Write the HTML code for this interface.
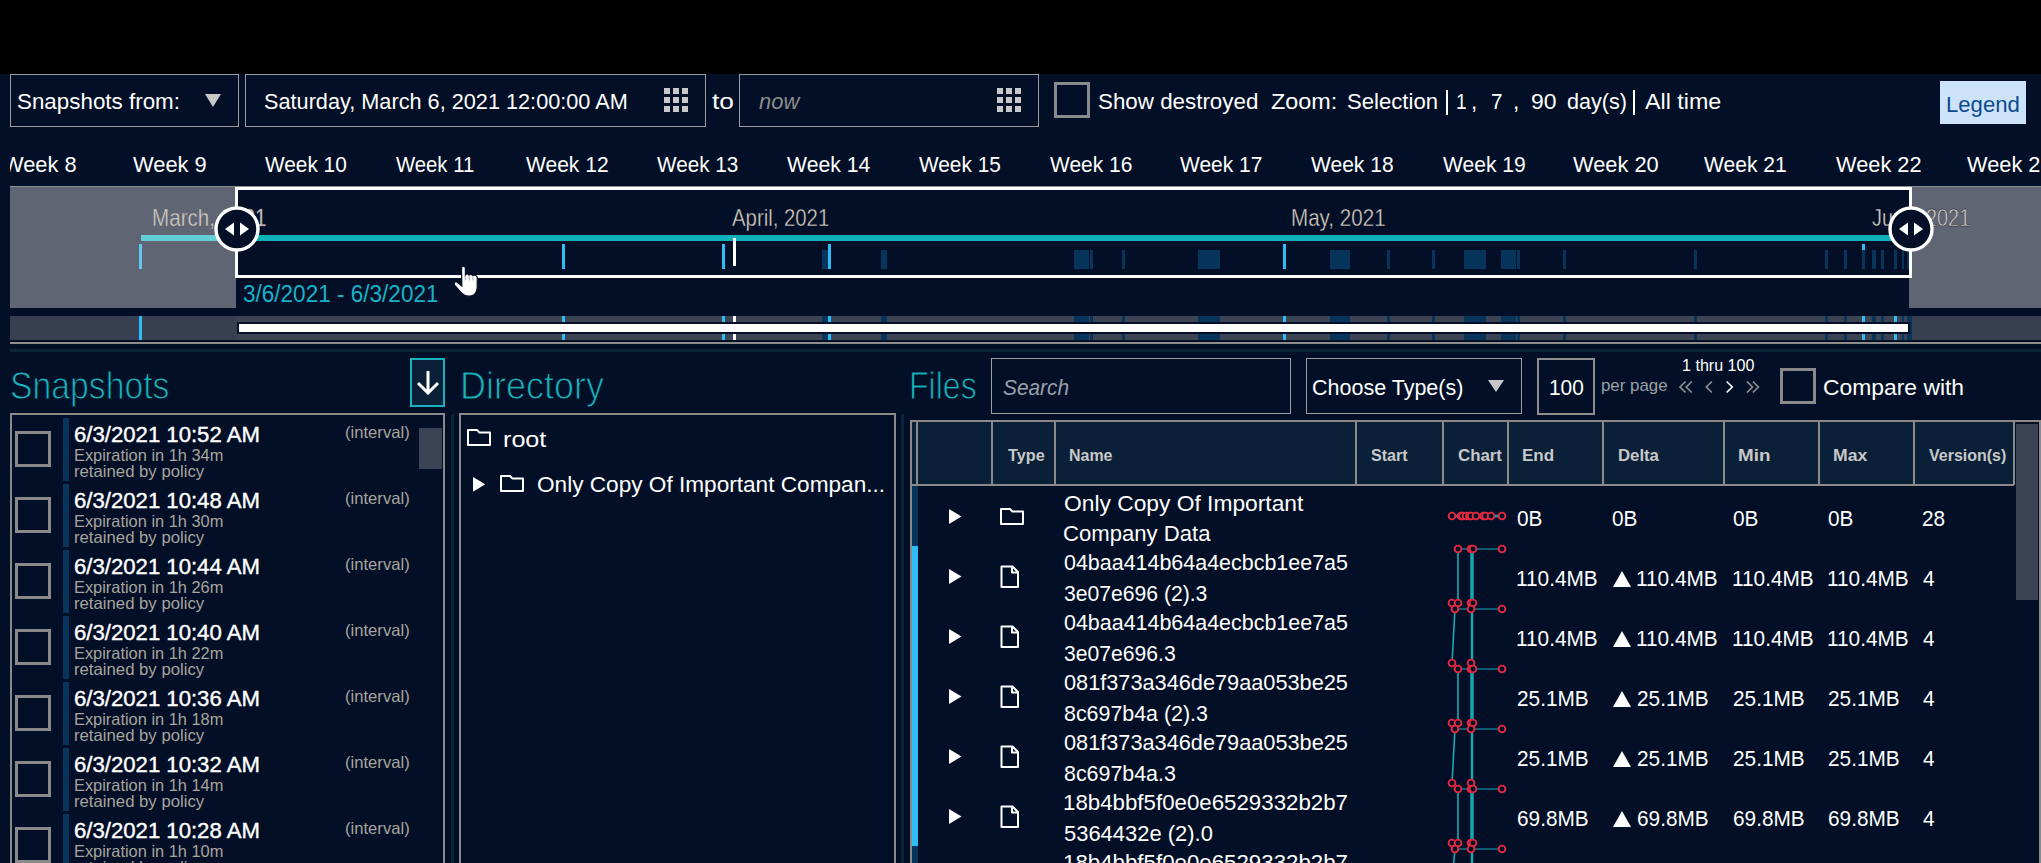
<!DOCTYPE html><html><head><meta charset="utf-8"><title>Snapshots</title><style>
*{margin:0;padding:0;box-sizing:border-box}
html,body{width:2041px;height:863px;overflow:hidden;background:#020f26;font-family:"Liberation Sans",sans-serif;color:#fff}
.a{position:absolute}
.t{position:absolute;white-space:nowrap;line-height:1;transform-origin:0 0}
.grid{position:absolute;width:25px;height:25px}
.grid i{position:absolute;width:6px;height:6px;background:#c8c8c8}
</style></head><body>
<div class="a" style="left:0px;top:0px;width:2041px;height:74px;background:#000;"></div>
<div class="a" style="left:10px;top:74px;width:229px;height:53px;border:1px solid #9c9c9c;background:transparent"></div>
<div class="t" style="left:16.99px;top:91px;font-size:22.5px;color:#fff;transform:scaleX(0.9946);">Snapshots from:</div>
<svg class="a" style="left:205px;top:94px" width="16" height="13"><polygon points="0,0 16,0 8,13" fill="#c8c8c8"/></svg>
<div class="a" style="left:245px;top:74px;width:461px;height:53px;border:1px solid #9c9c9c;background:transparent"></div>
<div class="t" style="left:264.02px;top:91px;font-size:22.5px;color:#fff;transform:scaleX(0.9642);">Saturday, March 6, 2021 12:00:00 AM</div>
<div class="grid" style="left:664px;top:88px"><i style="left:0px;top:0px"></i><i style="left:9px;top:0px"></i><i style="left:18px;top:0px"></i><i style="left:0px;top:9px"></i><i style="left:9px;top:9px"></i><i style="left:18px;top:9px"></i><i style="left:0px;top:18px"></i><i style="left:9px;top:18px"></i><i style="left:18px;top:18px"></i></div>
<div class="t" style="left:711.61px;top:91px;font-size:22.5px;color:#fff;transform:scaleX(1.1681);">to</div>
<div class="a" style="left:739px;top:74px;width:300px;height:53px;border:1px solid #9c9c9c;background:transparent"></div>
<div class="t" style="left:758.67px;top:91px;font-size:22.5px;color:#8c8c8c;font-style:italic;transform:scaleX(0.9745);">now</div>
<div class="grid" style="left:997px;top:88px"><i style="left:0px;top:0px"></i><i style="left:9px;top:0px"></i><i style="left:18px;top:0px"></i><i style="left:0px;top:9px"></i><i style="left:9px;top:9px"></i><i style="left:18px;top:9px"></i><i style="left:0px;top:18px"></i><i style="left:9px;top:18px"></i><i style="left:18px;top:18px"></i></div>
<div class="a" style="left:1054px;top:82px;width:36px;height:36px;border:3px solid #8a8a8a;background:transparent"></div>
<div class="t" style="left:1097.99px;top:91px;font-size:22.5px;color:#fff;transform:scaleX(0.9939);">Show destroyed</div>
<div class="t" style="left:1271.3px;top:91px;font-size:22.5px;color:#fff;transform:scaleX(1.0395);">Zoom:</div>
<div class="t" style="left:1347.0px;top:91px;font-size:22.5px;color:#fff;transform:scaleX(0.9831);">Selection</div>
<div class="t" style="left:1530.57px;top:91px;font-size:22.5px;color:#fff;transform:scaleX(1.0183);">90</div>
<div class="t" style="left:1567.14px;top:91px;font-size:22.5px;color:#fff;transform:scaleX(0.9587);">day(s)</div>
<div class="t" style="left:1644.5px;top:91px;font-size:22.5px;color:#fff;transform:scaleX(1.0345);">All time</div>
<div class="t" style="left:1456.07px;top:91px;font-size:22.5px;color:#fff;transform:scaleX(0.8480);">1</div>
<div class="t" style="left:1490.57px;top:91px;font-size:22.5px;color:#fff;transform:scaleX(0.9182);">7</div>
<div class="t" style="left:1471px;top:91px;font-size:22.5px;color:#fff;">,</div>
<div class="t" style="left:1513px;top:91px;font-size:22.5px;color:#fff;">,</div>
<div class="a" style="left:1446px;top:90px;width:2px;height:25px;background:#fff;"></div>
<div class="a" style="left:1633px;top:90px;width:2px;height:25px;background:#fff;"></div>
<div class="a" style="left:1940px;top:81px;width:86px;height:43px;background:#cce3fa;"></div>
<div class="t" style="left:1946.23px;top:94px;font-size:22.5px;color:#0c4a8e;transform:scaleX(0.9835);">Legend</div>
<div class="a" style="left:10px;top:140px;width:2031px;height:46px;overflow:hidden">
<div class="t" style="left:-7.21px;top:14px;font-size:22.5px;transform:scaleX(0.9704)">Week 8</div>
<div class="t" style="left:123.19px;top:14px;font-size:22.5px;transform:scaleX(0.9719)">Week 9</div>
<div class="t" style="left:254.60px;top:14px;font-size:22.5px;transform:scaleX(0.9244)">Week 10</div>
<div class="t" style="left:386.10px;top:14px;font-size:22.5px;transform:scaleX(0.9017)">Week 11</div>
<div class="t" style="left:516.39px;top:14px;font-size:22.5px;transform:scaleX(0.9348)">Week 12</div>
<div class="t" style="left:647.20px;top:14px;font-size:22.5px;transform:scaleX(0.9187)">Week 13</div>
<div class="t" style="left:777.09px;top:14px;font-size:22.5px;transform:scaleX(0.9425)">Week 14</div>
<div class="t" style="left:909.40px;top:14px;font-size:22.5px;transform:scaleX(0.9255)">Week 15</div>
<div class="t" style="left:1039.70px;top:14px;font-size:22.5px;transform:scaleX(0.9313)">Week 16</div>
<div class="t" style="left:1170.00px;top:14px;font-size:22.5px;transform:scaleX(0.9314)">Week 17</div>
<div class="t" style="left:1300.59px;top:14px;font-size:22.5px;transform:scaleX(0.9347)">Week 18</div>
<div class="t" style="left:1432.89px;top:14px;font-size:22.5px;transform:scaleX(0.9359)">Week 19</div>
<div class="t" style="left:1563.09px;top:14px;font-size:22.5px;transform:scaleX(0.9690)">Week 20</div>
<div class="t" style="left:1693.99px;top:14px;font-size:22.5px;transform:scaleX(0.9359)">Week 21</div>
<div class="t" style="left:1825.89px;top:14px;font-size:22.5px;transform:scaleX(0.9681)">Week 22</div>
<div class="t" style="left:1956.89px;top:14px;font-size:22.5px;transform:scaleX(0.9679)">Week 23</div>
</div>
<div class="a" style="left:10px;top:186px;width:2031px;height:122px;background:#5f6573;"></div>
<div class="a" style="left:10px;top:186px;width:2031px;height:1px;background:#8f8f8f;"></div>
<div class="a" style="left:236px;top:187px;width:1673px;height:121px;background:#020f26;"></div>
<div class="a" style="left:141px;top:235px;width:95px;height:6px;background:#62ced6;"></div>
<div class="a" style="left:236px;top:235px;width:1660px;height:6px;background:#10b1bb;"></div>
<div class="t" style="left:151.85px;top:206px;font-size:24px;color:#d4ccc2;transform:scaleX(0.8586);-webkit-text-stroke:0.35px #5f6573">March, 2021</div>
<div class="t" style="left:732.4px;top:206px;font-size:24px;color:#d4ccc2;transform:scaleX(0.8474);-webkit-text-stroke:0.35px #020f26">April, 2021</div>
<div class="t" style="left:1291.35px;top:206px;font-size:24px;color:#d4ccc2;transform:scaleX(0.8576);-webkit-text-stroke:0.35px #020f26">May, 2021</div>
<div class="t" style="left:1871.7px;top:206px;font-size:24px;color:#d4ccc2;transform:scaleX(0.8265);-webkit-text-stroke:0.35px #020f26">June, 2021</div>
<div class="a" style="left:139px;top:244px;width:3px;height:25px;background:#60c9f2;"></div>
<div class="a" style="left:822px;top:250px;width:9px;height:19px;background:#07345a;"></div>
<div class="a" style="left:881px;top:250px;width:6px;height:19px;background:#07345a;"></div>
<div class="a" style="left:1074px;top:250px;width:15px;height:19px;background:#07345a;"></div>
<div class="a" style="left:1090px;top:250px;width:3px;height:19px;background:#07345a;"></div>
<div class="a" style="left:1122px;top:250px;width:3px;height:19px;background:#07345a;"></div>
<div class="a" style="left:1198px;top:250px;width:22px;height:19px;background:#07345a;"></div>
<div class="a" style="left:1330px;top:250px;width:20px;height:19px;background:#07345a;"></div>
<div class="a" style="left:1387px;top:250px;width:3px;height:19px;background:#07345a;"></div>
<div class="a" style="left:1432px;top:250px;width:3px;height:19px;background:#07345a;"></div>
<div class="a" style="left:1464px;top:250px;width:22px;height:19px;background:#07345a;"></div>
<div class="a" style="left:1501px;top:250px;width:15px;height:19px;background:#07345a;"></div>
<div class="a" style="left:1517px;top:250px;width:3px;height:19px;background:#07345a;"></div>
<div class="a" style="left:1563px;top:250px;width:3px;height:19px;background:#07345a;"></div>
<div class="a" style="left:1694px;top:250px;width:3px;height:19px;background:#07345a;"></div>
<div class="a" style="left:1825px;top:250px;width:3px;height:19px;background:#07345a;"></div>
<div class="a" style="left:1844px;top:250px;width:3px;height:19px;background:#07345a;"></div>
<div class="a" style="left:1862px;top:250px;width:3px;height:19px;background:#07345a;"></div>
<div class="a" style="left:1872px;top:250px;width:4px;height:19px;background:#07345a;"></div>
<div class="a" style="left:1881px;top:250px;width:3px;height:19px;background:#07345a;"></div>
<div class="a" style="left:1894px;top:250px;width:3px;height:19px;background:#07345a;"></div>
<div class="a" style="left:1902px;top:250px;width:2px;height:19px;background:#07345a;"></div>
<div class="a" style="left:1907px;top:250px;width:2px;height:19px;background:#07345a;"></div>
<div class="a" style="left:562px;top:244px;width:3px;height:25px;background:#2cbdf4;"></div>
<div class="a" style="left:722px;top:244px;width:3px;height:25px;background:#2cbdf4;"></div>
<div class="a" style="left:828px;top:244px;width:3px;height:25px;background:#2cbdf4;"></div>
<div class="a" style="left:1283px;top:244px;width:3px;height:25px;background:#2cbdf4;"></div>
<div class="a" style="left:1862px;top:244px;width:3px;height:6px;background:#2cbdf4;"></div>
<div class="a" style="left:733px;top:238px;width:3px;height:28px;background:#fff;"></div>
<div class="a" style="left:235px;top:187px;width:1677px;height:91px;border:3px solid #fff;background:transparent"></div>
<svg class="a" style="left:213.5px;top:206px" width="46" height="46"><circle cx="23" cy="23" r="21" fill="#020f26" stroke="#fff" stroke-width="3.4"/><polygon points="11,23 20,16.5 20,29.5" fill="#fff"/><polygon points="35,23 26,16.5 26,29.5" fill="#fff"/></svg>
<svg class="a" style="left:1887.5px;top:206px" width="46" height="46"><circle cx="23" cy="23" r="21" fill="#020f26" stroke="#fff" stroke-width="3.4"/><polygon points="11,23 20,16.5 20,29.5" fill="#fff"/><polygon points="35,23 26,16.5 26,29.5" fill="#fff"/></svg>
<div class="t" style="left:242.51px;top:283.3px;font-size:23.5px;color:#18b2c8;transform:scaleX(0.9590);">3/6/2021 - 6/3/2021</div>
<div class="a" style="left:10px;top:316px;width:2031px;height:24px;background:#373f50;"></div>
<div class="a" style="left:822px;top:316px;width:9px;height:24px;background:#07345a;"></div>
<div class="a" style="left:881px;top:316px;width:6px;height:24px;background:#07345a;"></div>
<div class="a" style="left:1074px;top:316px;width:15px;height:24px;background:#07345a;"></div>
<div class="a" style="left:1090px;top:316px;width:3px;height:24px;background:#07345a;"></div>
<div class="a" style="left:1122px;top:316px;width:3px;height:24px;background:#07345a;"></div>
<div class="a" style="left:1198px;top:316px;width:22px;height:24px;background:#07345a;"></div>
<div class="a" style="left:1330px;top:316px;width:20px;height:24px;background:#07345a;"></div>
<div class="a" style="left:1387px;top:316px;width:3px;height:24px;background:#07345a;"></div>
<div class="a" style="left:1432px;top:316px;width:3px;height:24px;background:#07345a;"></div>
<div class="a" style="left:1464px;top:316px;width:22px;height:24px;background:#07345a;"></div>
<div class="a" style="left:1501px;top:316px;width:15px;height:24px;background:#07345a;"></div>
<div class="a" style="left:1517px;top:316px;width:3px;height:24px;background:#07345a;"></div>
<div class="a" style="left:1563px;top:316px;width:3px;height:24px;background:#07345a;"></div>
<div class="a" style="left:1694px;top:316px;width:3px;height:24px;background:#07345a;"></div>
<div class="a" style="left:1825px;top:316px;width:3px;height:24px;background:#07345a;"></div>
<div class="a" style="left:1844px;top:316px;width:3px;height:24px;background:#07345a;"></div>
<div class="a" style="left:1862px;top:316px;width:3px;height:24px;background:#07345a;"></div>
<div class="a" style="left:1872px;top:316px;width:4px;height:24px;background:#07345a;"></div>
<div class="a" style="left:1881px;top:316px;width:3px;height:24px;background:#07345a;"></div>
<div class="a" style="left:1894px;top:316px;width:3px;height:24px;background:#07345a;"></div>
<div class="a" style="left:1902px;top:316px;width:2px;height:24px;background:#07345a;"></div>
<div class="a" style="left:1907px;top:316px;width:2px;height:24px;background:#07345a;"></div>
<div class="a" style="left:236px;top:316px;width:1674px;height:24px;background:#3c4454;"></div>
<div class="a" style="left:822px;top:316px;width:9px;height:24px;background:#07345a;"></div>
<div class="a" style="left:881px;top:316px;width:6px;height:24px;background:#07345a;"></div>
<div class="a" style="left:1074px;top:316px;width:15px;height:24px;background:#07345a;"></div>
<div class="a" style="left:1090px;top:316px;width:3px;height:24px;background:#07345a;"></div>
<div class="a" style="left:1122px;top:316px;width:3px;height:24px;background:#07345a;"></div>
<div class="a" style="left:1198px;top:316px;width:22px;height:24px;background:#07345a;"></div>
<div class="a" style="left:1330px;top:316px;width:20px;height:24px;background:#07345a;"></div>
<div class="a" style="left:1387px;top:316px;width:3px;height:24px;background:#07345a;"></div>
<div class="a" style="left:1432px;top:316px;width:3px;height:24px;background:#07345a;"></div>
<div class="a" style="left:1464px;top:316px;width:22px;height:24px;background:#07345a;"></div>
<div class="a" style="left:1501px;top:316px;width:15px;height:24px;background:#07345a;"></div>
<div class="a" style="left:1517px;top:316px;width:3px;height:24px;background:#07345a;"></div>
<div class="a" style="left:1563px;top:316px;width:3px;height:24px;background:#07345a;"></div>
<div class="a" style="left:1694px;top:316px;width:3px;height:24px;background:#07345a;"></div>
<div class="a" style="left:1825px;top:316px;width:3px;height:24px;background:#07345a;"></div>
<div class="a" style="left:1844px;top:316px;width:3px;height:24px;background:#07345a;"></div>
<div class="a" style="left:1862px;top:316px;width:3px;height:24px;background:#07345a;"></div>
<div class="a" style="left:1872px;top:316px;width:4px;height:24px;background:#07345a;"></div>
<div class="a" style="left:1881px;top:316px;width:3px;height:24px;background:#07345a;"></div>
<div class="a" style="left:1894px;top:316px;width:3px;height:24px;background:#07345a;"></div>
<div class="a" style="left:1902px;top:316px;width:2px;height:24px;background:#07345a;"></div>
<div class="a" style="left:1907px;top:316px;width:2px;height:24px;background:#07345a;"></div>
<div class="a" style="left:1907px;top:316px;width:5px;height:24px;background:#07345a;"></div>
<div class="a" style="left:139px;top:316px;width:3px;height:24px;background:#2cbdf4;"></div>
<div class="a" style="left:562px;top:316px;width:3px;height:24px;background:#2cbdf4;"></div>
<div class="a" style="left:722px;top:316px;width:3px;height:24px;background:#2cbdf4;"></div>
<div class="a" style="left:828px;top:316px;width:3px;height:24px;background:#2cbdf4;"></div>
<div class="a" style="left:1283px;top:316px;width:3px;height:24px;background:#2cbdf4;"></div>
<div class="a" style="left:1862px;top:316px;width:3px;height:24px;background:#2cbdf4;"></div>
<div class="a" style="left:1894px;top:316px;width:3px;height:24px;background:#2cbdf4;"></div>
<div class="a" style="left:733px;top:316px;width:3px;height:24px;background:#fff;"></div>
<div class="a" style="left:237px;top:322px;width:1673px;height:12px;background:#020f26;"></div>
<div class="a" style="left:239px;top:324px;width:1669px;height:8px;background:#fff;"></div>
<div class="a" style="left:10px;top:342px;width:2031px;height:2px;background:#8e8b88;"></div>
<div class="a" style="left:10px;top:349px;width:2031px;height:3px;background:#0a2538;"></div>
<div class="t" style="left:10.23px;top:365.5px;font-size:39px;color:#17b3bd;transform:scaleX(0.8650);-webkit-text-stroke:1px #020f26">Snapshots</div>
<div class="a" style="left:410px;top:358px;width:35px;height:49px;border:2px solid #17b3bd;background:#0a2038"></div>
<svg class="a" style="left:416px;top:370px" width="24" height="25"><path d="M12 1 V23 M2 13 L12 23 L22 13" stroke="#fff" stroke-width="3" fill="none"/></svg>
<div class="a" style="left:10px;top:413px;width:435px;height:460px;border:2px solid #8a8a8a;background:transparent"></div>
<div class="a" style="left:419px;top:428px;width:23px;height:41px;background:#3a4354;"></div>
<div class="a" style="left:15px;top:431px;width:36px;height:36px;border:3px solid #8a8a8a;background:transparent"></div>
<div class="a" style="left:63px;top:418px;width:6px;height:63px;background:#07345a;"></div>
<div class="t" style="left:74.19px;top:423.6px;font-size:22.5px;color:#fff;transform:scaleX(0.9841);-webkit-text-stroke:0.4px #fff">6/3/2021 10:52 AM</div>
<div class="t" style="left:73.69px;top:446.7px;font-size:16.5px;color:#a9a49e;transform:scaleX(0.9927);">Expiration in 1h 34m</div>
<div class="t" style="left:73.91px;top:462.5px;font-size:16.5px;color:#a9a49e;transform:scaleX(1.0134);">retained by policy</div>
<div class="t" style="left:344.5px;top:423.9px;font-size:16.5px;color:#a9a49e;transform:scaleX(1.0077);">(interval)</div>
<div class="a" style="left:15px;top:497px;width:36px;height:36px;border:3px solid #8a8a8a;background:transparent"></div>
<div class="a" style="left:63px;top:484px;width:6px;height:63px;background:#07345a;"></div>
<div class="t" style="left:74.19px;top:489.6px;font-size:22.5px;color:#fff;transform:scaleX(0.9841);-webkit-text-stroke:0.4px #fff">6/3/2021 10:48 AM</div>
<div class="t" style="left:73.69px;top:512.7px;font-size:16.5px;color:#a9a49e;transform:scaleX(0.9927);">Expiration in 1h 30m</div>
<div class="t" style="left:73.91px;top:528.5px;font-size:16.5px;color:#a9a49e;transform:scaleX(1.0134);">retained by policy</div>
<div class="t" style="left:344.5px;top:489.9px;font-size:16.5px;color:#a9a49e;transform:scaleX(1.0077);">(interval)</div>
<div class="a" style="left:15px;top:563px;width:36px;height:36px;border:3px solid #8a8a8a;background:transparent"></div>
<div class="a" style="left:63px;top:550px;width:6px;height:63px;background:#07345a;"></div>
<div class="t" style="left:74.19px;top:555.6px;font-size:22.5px;color:#fff;transform:scaleX(0.9841);-webkit-text-stroke:0.4px #fff">6/3/2021 10:44 AM</div>
<div class="t" style="left:73.69px;top:578.7px;font-size:16.5px;color:#a9a49e;transform:scaleX(0.9927);">Expiration in 1h 26m</div>
<div class="t" style="left:73.91px;top:594.5px;font-size:16.5px;color:#a9a49e;transform:scaleX(1.0134);">retained by policy</div>
<div class="t" style="left:344.5px;top:555.9px;font-size:16.5px;color:#a9a49e;transform:scaleX(1.0077);">(interval)</div>
<div class="a" style="left:15px;top:629px;width:36px;height:36px;border:3px solid #8a8a8a;background:transparent"></div>
<div class="a" style="left:63px;top:616px;width:6px;height:63px;background:#07345a;"></div>
<div class="t" style="left:74.19px;top:621.6px;font-size:22.5px;color:#fff;transform:scaleX(0.9841);-webkit-text-stroke:0.4px #fff">6/3/2021 10:40 AM</div>
<div class="t" style="left:73.69px;top:644.7px;font-size:16.5px;color:#a9a49e;transform:scaleX(0.9927);">Expiration in 1h 22m</div>
<div class="t" style="left:73.91px;top:660.5px;font-size:16.5px;color:#a9a49e;transform:scaleX(1.0134);">retained by policy</div>
<div class="t" style="left:344.5px;top:621.9px;font-size:16.5px;color:#a9a49e;transform:scaleX(1.0077);">(interval)</div>
<div class="a" style="left:15px;top:695px;width:36px;height:36px;border:3px solid #8a8a8a;background:transparent"></div>
<div class="a" style="left:63px;top:682px;width:6px;height:63px;background:#07345a;"></div>
<div class="t" style="left:74.19px;top:687.6px;font-size:22.5px;color:#fff;transform:scaleX(0.9841);-webkit-text-stroke:0.4px #fff">6/3/2021 10:36 AM</div>
<div class="t" style="left:73.69px;top:710.7px;font-size:16.5px;color:#a9a49e;transform:scaleX(0.9927);">Expiration in 1h 18m</div>
<div class="t" style="left:73.91px;top:726.5px;font-size:16.5px;color:#a9a49e;transform:scaleX(1.0134);">retained by policy</div>
<div class="t" style="left:344.5px;top:687.9px;font-size:16.5px;color:#a9a49e;transform:scaleX(1.0077);">(interval)</div>
<div class="a" style="left:15px;top:761px;width:36px;height:36px;border:3px solid #8a8a8a;background:transparent"></div>
<div class="a" style="left:63px;top:748px;width:6px;height:63px;background:#07345a;"></div>
<div class="t" style="left:74.19px;top:753.6px;font-size:22.5px;color:#fff;transform:scaleX(0.9841);-webkit-text-stroke:0.4px #fff">6/3/2021 10:32 AM</div>
<div class="t" style="left:73.69px;top:776.7px;font-size:16.5px;color:#a9a49e;transform:scaleX(0.9927);">Expiration in 1h 14m</div>
<div class="t" style="left:73.91px;top:792.5px;font-size:16.5px;color:#a9a49e;transform:scaleX(1.0134);">retained by policy</div>
<div class="t" style="left:344.5px;top:753.9px;font-size:16.5px;color:#a9a49e;transform:scaleX(1.0077);">(interval)</div>
<div class="a" style="left:15px;top:827px;width:36px;height:36px;border:3px solid #8a8a8a;background:transparent"></div>
<div class="a" style="left:63px;top:814px;width:6px;height:63px;background:#07345a;"></div>
<div class="t" style="left:74.19px;top:819.6px;font-size:22.5px;color:#fff;transform:scaleX(0.9841);-webkit-text-stroke:0.4px #fff">6/3/2021 10:28 AM</div>
<div class="t" style="left:73.69px;top:842.7px;font-size:16.5px;color:#a9a49e;transform:scaleX(0.9927);">Expiration in 1h 10m</div>
<div class="t" style="left:73.91px;top:858.5px;font-size:16.5px;color:#a9a49e;transform:scaleX(1.0134);">retained by policy</div>
<div class="t" style="left:344.5px;top:819.9px;font-size:16.5px;color:#a9a49e;transform:scaleX(1.0077);">(interval)</div>
<div class="a" style="left:451px;top:414px;width:3px;height:449px;background:#0a2538;"></div>
<div class="t" style="left:459.62px;top:365.5px;font-size:39px;color:#17b3bd;transform:scaleX(0.9223);-webkit-text-stroke:1px #020f26">Directory</div>
<div class="a" style="left:459px;top:413px;width:437px;height:460px;border:2px solid #8a8a8a;background:transparent"></div>
<svg class="a" style="left:466px;top:428px" width="27" height="20"><path d="M2 2 H11 L13.5 4.6 H24 V17 H2 Z" stroke="#fff" stroke-width="2" fill="none" stroke-linejoin="round"/></svg>
<div class="t" style="left:503.37px;top:429px;font-size:22.5px;color:#fff;transform:scaleX(1.1178);">root</div>
<svg class="a" style="left:473px;top:476.5px" width="13" height="15"><polygon points="0,0 12.2,7.35 0,14.7" fill="#fff"/></svg>
<svg class="a" style="left:499px;top:474px" width="27" height="20"><path d="M2 2 H11 L13.5 4.6 H24 V17 H2 Z" stroke="#fff" stroke-width="2" fill="none" stroke-linejoin="round"/></svg>
<div class="t" style="left:536.88px;top:474px;font-size:22.5px;color:#fff;transform:scaleX(1.0048);">Only Copy Of Important Compan...</div>
<div class="a" style="left:901px;top:414px;width:3px;height:449px;background:#0a2538;"></div>
<div class="t" style="left:908.73px;top:365.5px;font-size:39px;color:#17b3bd;transform:scaleX(0.8226);-webkit-text-stroke:1px #020f26">Files</div>
<div class="a" style="left:991px;top:358px;width:300px;height:56px;border:1px solid #9c9c9c;background:transparent"></div>
<div class="t" style="left:1002.77px;top:376.8px;font-size:22px;color:#9aa0aa;font-style:italic;transform:scaleX(0.9473);">Search</div>
<div class="a" style="left:1306px;top:358px;width:216px;height:56px;border:1px solid #9c9c9c;background:transparent"></div>
<div class="t" style="left:1311.92px;top:377px;font-size:22.5px;color:#fff;transform:scaleX(0.9556);">Choose Type(s)</div>
<svg class="a" style="left:1488px;top:380px" width="16" height="12"><polygon points="0,0 16,0 8,12" fill="#c8c8c8"/></svg>
<div class="a" style="left:1537px;top:358px;width:58px;height:57px;border:2px solid #8f8f8f;background:transparent"></div>
<div class="t" style="left:1549.04px;top:376.8px;font-size:22.5px;color:#fff;transform:scaleX(0.9260);">100</div>
<div class="t" style="left:1600.6px;top:376.9px;font-size:17px;color:#9aa0a6;transform:scaleX(0.9911);">per page</div>
<div class="t" style="left:1682.39px;top:357.6px;font-size:16px;color:#fff;transform:scaleX(1.0051);">1 thru 100</div>
<svg class="a" style="left:0;top:0" width="1770" height="400"><path d="M1685.6 381.5 L1680.0 387 L1685.6 392.5" stroke="#8f8f8f" stroke-width="1.7" fill="none"/><path d="M1691.8 381.5 L1686.2 387 L1691.8 392.5" stroke="#8f8f8f" stroke-width="1.7" fill="none"/><path d="M1711.9 381.5 L1706.3 387 L1711.9 392.5" stroke="#8f8f8f" stroke-width="1.7" fill="none"/><path d="M1726.6 381.5 L1732.2 387 L1726.6 392.5" stroke="#fff" stroke-width="1.7" fill="none"/><path d="M1746.9 381.5 L1752.5 387 L1746.9 392.5" stroke="#8f8f8f" stroke-width="1.7" fill="none"/><path d="M1752.8 381.5 L1758.4 387 L1752.8 392.5" stroke="#8f8f8f" stroke-width="1.7" fill="none"/></svg>
<div class="a" style="left:1780px;top:368px;width:36px;height:36px;border:3px solid #8a8a8a;background:transparent"></div>
<div class="t" style="left:1823.26px;top:377.2px;font-size:22.5px;color:#fff;transform:scaleX(1.0165);">Compare with</div>
<div class="a" style="left:910px;top:420px;width:1131px;height:2px;background:#8a8a8a;"></div>
<div class="a" style="left:910px;top:420px;width:2px;height:443px;background:#8a8a8a;"></div>
<div class="a" style="left:2039px;top:420px;width:2px;height:443px;background:#8a8a8a;"></div>
<div class="a" style="left:912px;top:422px;width:1102px;height:62px;background:#0a2038;"></div>
<div class="a" style="left:912px;top:484px;width:1102px;height:2px;background:#8a8a8a;"></div>
<div class="a" style="left:916px;top:422px;width:2px;height:63px;background:#8a8a8a;"></div>
<div class="a" style="left:991px;top:422px;width:2px;height:63px;background:#8a8a8a;"></div>
<div class="a" style="left:1054px;top:422px;width:2px;height:63px;background:#8a8a8a;"></div>
<div class="a" style="left:1355px;top:422px;width:2px;height:63px;background:#8a8a8a;"></div>
<div class="a" style="left:1442px;top:422px;width:2px;height:63px;background:#8a8a8a;"></div>
<div class="a" style="left:1507px;top:422px;width:2px;height:63px;background:#8a8a8a;"></div>
<div class="a" style="left:1602px;top:422px;width:2px;height:63px;background:#8a8a8a;"></div>
<div class="a" style="left:1723px;top:422px;width:2px;height:63px;background:#8a8a8a;"></div>
<div class="a" style="left:1818px;top:422px;width:2px;height:63px;background:#8a8a8a;"></div>
<div class="a" style="left:1913px;top:422px;width:2px;height:63px;background:#8a8a8a;"></div>
<div class="a" style="left:2013px;top:422px;width:2px;height:63px;background:#8a8a8a;"></div>
<div class="t" style="left:1007.74px;top:446.8px;font-size:17px;color:#c8c8c8;font-weight:bold;transform:scaleX(0.9539);">Type</div>
<div class="t" style="left:1068.96px;top:446.8px;font-size:17px;color:#c8c8c8;font-weight:bold;transform:scaleX(0.9394);">Name</div>
<div class="t" style="left:1370.82px;top:446.8px;font-size:17px;color:#c8c8c8;font-weight:bold;transform:scaleX(0.9475);">Start</div>
<div class="t" style="left:1457.53px;top:446.8px;font-size:17px;color:#c8c8c8;font-weight:bold;transform:scaleX(0.9881);">Chart</div>
<div class="t" style="left:1522.39px;top:446.8px;font-size:17px;color:#c8c8c8;font-weight:bold;transform:scaleX(1.0027);">End</div>
<div class="t" style="left:1617.51px;top:446.8px;font-size:17px;color:#c8c8c8;font-weight:bold;transform:scaleX(0.9845);">Delta</div>
<div class="t" style="left:1738.18px;top:446.8px;font-size:17px;color:#c8c8c8;font-weight:bold;transform:scaleX(1.1064);">Min</div>
<div class="t" style="left:1833.26px;top:446.8px;font-size:17px;color:#c8c8c8;font-weight:bold;transform:scaleX(1.0353);">Max</div>
<div class="t" style="left:1928.72px;top:446.8px;font-size:17px;color:#c8c8c8;font-weight:bold;transform:scaleX(0.9402);">Version(s)</div>
<div class="a" style="left:2016px;top:424px;width:22px;height:176px;background:#3a4354;"></div>
<div class="a" style="left:912px;top:486px;width:6px;height:60px;background:#07345a;"></div>
<div class="a" style="left:912px;top:546px;width:6px;height:300px;background:#2cbdf4;"></div>
<div class="a" style="left:912px;top:846px;width:6px;height:17px;background:#07345a;"></div>
<svg class="a" style="left:949px;top:509.1px" width="13" height="15"><polygon points="0,0 12.5,7.5 0,15" fill="#fff"/></svg>
<svg class="a" style="left:999px;top:507.1px" width="27" height="20"><path d="M2 2 H11 L13.5 4.6 H24 V17 H2 Z" stroke="#fff" stroke-width="2" fill="none" stroke-linejoin="round"/></svg>
<div class="t" style="left:1063.57px;top:492.8px;font-size:22.5px;color:#fff;transform:scaleX(1.0127);">Only Copy Of Important</div>
<div class="t" style="left:1063.49px;top:522.8000000000001px;font-size:22.5px;color:#fff;transform:scaleX(0.9829);">Company Data</div>
<div class="t" style="left:1516.77px;top:509.0px;font-size:21.5px;color:#fff;transform:scaleX(0.9670);">0B</div>
<div class="t" style="left:1611.67px;top:509.0px;font-size:21.5px;color:#fff;transform:scaleX(0.9670);">0B</div>
<div class="t" style="left:1733.17px;top:509.0px;font-size:21.5px;color:#fff;transform:scaleX(0.9670);">0B</div>
<div class="t" style="left:1827.87px;top:509.0px;font-size:21.5px;color:#fff;transform:scaleX(0.9670);">0B</div>
<div class="t" style="left:1921.96px;top:509.0px;font-size:21.5px;color:#fff;transform:scaleX(0.9670);">28</div>
<svg class="a" style="left:949px;top:569.1px" width="13" height="15"><polygon points="0,0 12.5,7.5 0,15" fill="#fff"/></svg>
<svg class="a" style="left:1000px;top:564.6px" width="20" height="24"><path d="M1.5 1.5 H12.5 L18 7 V22 H1.5 Z M12 2 V7.5 H17.5" stroke="#fff" stroke-width="2" fill="none" stroke-linejoin="round"/></svg>
<div class="t" style="left:1063.74px;top:552.0px;font-size:22.5px;color:#fff;transform:scaleX(0.9534);">04baa414b64a4ecbcb1ee7a5</div>
<div class="t" style="left:1063.86px;top:582.8000000000001px;font-size:22.5px;color:#fff;transform:scaleX(0.9391);">3e07e696 (2).3</div>
<div class="t" style="left:1516.04px;top:569.0px;font-size:21.5px;color:#fff;transform:scaleX(0.9670);">110.4MB</div>
<svg class="a" style="left:1613px;top:570.5px" width="18" height="16"><polygon points="9,0 18,16 0,16" fill="#fff"/></svg>
<div class="t" style="left:1636.24px;top:569.0px;font-size:21.5px;color:#fff;transform:scaleX(0.9670);">110.4MB</div>
<div class="t" style="left:1732.44px;top:569.0px;font-size:21.5px;color:#fff;transform:scaleX(0.9670);">110.4MB</div>
<div class="t" style="left:1827.14px;top:569.0px;font-size:21.5px;color:#fff;transform:scaleX(0.9670);">110.4MB</div>
<div class="t" style="left:1922.58px;top:569.0px;font-size:21.5px;color:#fff;transform:scaleX(0.9670);">4</div>
<svg class="a" style="left:949px;top:629.1px" width="13" height="15"><polygon points="0,0 12.5,7.5 0,15" fill="#fff"/></svg>
<svg class="a" style="left:1000px;top:624.6px" width="20" height="24"><path d="M1.5 1.5 H12.5 L18 7 V22 H1.5 Z M12 2 V7.5 H17.5" stroke="#fff" stroke-width="2" fill="none" stroke-linejoin="round"/></svg>
<div class="t" style="left:1063.74px;top:612.0px;font-size:22.5px;color:#fff;transform:scaleX(0.9534);">04baa414b64a4ecbcb1ee7a5</div>
<div class="t" style="left:1063.86px;top:642.8000000000001px;font-size:22.5px;color:#fff;transform:scaleX(0.9391);">3e07e696.3</div>
<div class="t" style="left:1516.04px;top:629.0px;font-size:21.5px;color:#fff;transform:scaleX(0.9670);">110.4MB</div>
<svg class="a" style="left:1613px;top:630.5px" width="18" height="16"><polygon points="9,0 18,16 0,16" fill="#fff"/></svg>
<div class="t" style="left:1636.24px;top:629.0px;font-size:21.5px;color:#fff;transform:scaleX(0.9670);">110.4MB</div>
<div class="t" style="left:1732.44px;top:629.0px;font-size:21.5px;color:#fff;transform:scaleX(0.9670);">110.4MB</div>
<div class="t" style="left:1827.14px;top:629.0px;font-size:21.5px;color:#fff;transform:scaleX(0.9670);">110.4MB</div>
<div class="t" style="left:1922.58px;top:629.0px;font-size:21.5px;color:#fff;transform:scaleX(0.9670);">4</div>
<svg class="a" style="left:949px;top:689.1px" width="13" height="15"><polygon points="0,0 12.5,7.5 0,15" fill="#fff"/></svg>
<svg class="a" style="left:1000px;top:684.6px" width="20" height="24"><path d="M1.5 1.5 H12.5 L18 7 V22 H1.5 Z M12 2 V7.5 H17.5" stroke="#fff" stroke-width="2" fill="none" stroke-linejoin="round"/></svg>
<div class="t" style="left:1063.73px;top:672.0px;font-size:22.5px;color:#fff;transform:scaleX(0.9655);">081f373a346de79aa053be25</div>
<div class="t" style="left:1063.74px;top:702.8000000000001px;font-size:22.5px;color:#fff;transform:scaleX(0.9510);">8c697b4a (2).3</div>
<div class="t" style="left:1516.56px;top:689.0px;font-size:21.5px;color:#fff;transform:scaleX(0.9670);">25.1MB</div>
<svg class="a" style="left:1613px;top:690.5px" width="18" height="16"><polygon points="9,0 18,16 0,16" fill="#fff"/></svg>
<div class="t" style="left:1636.76px;top:689.0px;font-size:21.5px;color:#fff;transform:scaleX(0.9670);">25.1MB</div>
<div class="t" style="left:1732.96px;top:689.0px;font-size:21.5px;color:#fff;transform:scaleX(0.9670);">25.1MB</div>
<div class="t" style="left:1827.66px;top:689.0px;font-size:21.5px;color:#fff;transform:scaleX(0.9670);">25.1MB</div>
<div class="t" style="left:1922.58px;top:689.0px;font-size:21.5px;color:#fff;transform:scaleX(0.9670);">4</div>
<svg class="a" style="left:949px;top:749.1px" width="13" height="15"><polygon points="0,0 12.5,7.5 0,15" fill="#fff"/></svg>
<svg class="a" style="left:1000px;top:744.6px" width="20" height="24"><path d="M1.5 1.5 H12.5 L18 7 V22 H1.5 Z M12 2 V7.5 H17.5" stroke="#fff" stroke-width="2" fill="none" stroke-linejoin="round"/></svg>
<div class="t" style="left:1063.73px;top:732.0px;font-size:22.5px;color:#fff;transform:scaleX(0.9655);">081f373a346de79aa053be25</div>
<div class="t" style="left:1063.74px;top:762.8000000000001px;font-size:22.5px;color:#fff;transform:scaleX(0.9510);">8c697b4a.3</div>
<div class="t" style="left:1516.56px;top:749.0px;font-size:21.5px;color:#fff;transform:scaleX(0.9670);">25.1MB</div>
<svg class="a" style="left:1613px;top:750.5px" width="18" height="16"><polygon points="9,0 18,16 0,16" fill="#fff"/></svg>
<div class="t" style="left:1636.76px;top:749.0px;font-size:21.5px;color:#fff;transform:scaleX(0.9670);">25.1MB</div>
<div class="t" style="left:1732.96px;top:749.0px;font-size:21.5px;color:#fff;transform:scaleX(0.9670);">25.1MB</div>
<div class="t" style="left:1827.66px;top:749.0px;font-size:21.5px;color:#fff;transform:scaleX(0.9670);">25.1MB</div>
<div class="t" style="left:1922.58px;top:749.0px;font-size:21.5px;color:#fff;transform:scaleX(0.9670);">4</div>
<svg class="a" style="left:949px;top:809.1px" width="13" height="15"><polygon points="0,0 12.5,7.5 0,15" fill="#fff"/></svg>
<svg class="a" style="left:1000px;top:804.6px" width="20" height="24"><path d="M1.5 1.5 H12.5 L18 7 V22 H1.5 Z M12 2 V7.5 H17.5" stroke="#fff" stroke-width="2" fill="none" stroke-linejoin="round"/></svg>
<div class="t" style="left:1062.93px;top:792.0px;font-size:22.5px;color:#fff;transform:scaleX(0.9903);">18b4bbf5f0e0e6529332b2b7</div>
<div class="t" style="left:1063.72px;top:822.8000000000001px;font-size:22.5px;color:#fff;transform:scaleX(0.9755);">5364432e (2).0</div>
<div class="t" style="left:1516.56px;top:809.0px;font-size:21.5px;color:#fff;transform:scaleX(0.9670);">69.8MB</div>
<svg class="a" style="left:1613px;top:810.5px" width="18" height="16"><polygon points="9,0 18,16 0,16" fill="#fff"/></svg>
<div class="t" style="left:1636.76px;top:809.0px;font-size:21.5px;color:#fff;transform:scaleX(0.9670);">69.8MB</div>
<div class="t" style="left:1732.96px;top:809.0px;font-size:21.5px;color:#fff;transform:scaleX(0.9670);">69.8MB</div>
<div class="t" style="left:1827.66px;top:809.0px;font-size:21.5px;color:#fff;transform:scaleX(0.9670);">69.8MB</div>
<div class="t" style="left:1922.58px;top:809.0px;font-size:21.5px;color:#fff;transform:scaleX(0.9670);">4</div>
<svg class="a" style="left:949px;top:869.1px" width="13" height="15"><polygon points="0,0 12.5,7.5 0,15" fill="#fff"/></svg>
<svg class="a" style="left:1000px;top:864.6px" width="20" height="24"><path d="M1.5 1.5 H12.5 L18 7 V22 H1.5 Z M12 2 V7.5 H17.5" stroke="#fff" stroke-width="2" fill="none" stroke-linejoin="round"/></svg>
<div class="t" style="left:1062.93px;top:852.0px;font-size:22.5px;color:#fff;transform:scaleX(0.9903);">18b4bbf5f0e0e6529332b2b7</div>
<div class="t" style="left:1063.72px;top:882.8000000000001px;font-size:22.5px;color:#fff;transform:scaleX(0.9755);">5364432e.0</div>
<div class="t" style="left:1516.56px;top:869.0px;font-size:21.5px;color:#fff;transform:scaleX(0.9670);">69.8MB</div>
<svg class="a" style="left:1613px;top:870.5px" width="18" height="16"><polygon points="9,0 18,16 0,16" fill="#fff"/></svg>
<div class="t" style="left:1636.76px;top:869.0px;font-size:21.5px;color:#fff;transform:scaleX(0.9670);">69.8MB</div>
<div class="t" style="left:1732.96px;top:869.0px;font-size:21.5px;color:#fff;transform:scaleX(0.9670);">69.8MB</div>
<div class="t" style="left:1827.66px;top:869.0px;font-size:21.5px;color:#fff;transform:scaleX(0.9670);">69.8MB</div>
<div class="t" style="left:1922.58px;top:869.0px;font-size:21.5px;color:#fff;transform:scaleX(0.9670);">4</div>
<svg class="a" style="left:1440px;top:486px" width="70" height="377"><g stroke="#12aab5" stroke-linecap="butt"><line x1="12.0" y1="30.0" x2="62.0" y2="30.0" stroke-width="2.5"/><line x1="18.0" y1="63.0" x2="62.0" y2="63.0" stroke-width="1"/><line x1="18.0" y1="63.0" x2="18.0" y2="117.0" stroke-width="1.6"/><line x1="32.0" y1="63.0" x2="32.0" y2="123.0" stroke-width="3.4"/><line x1="15.0" y1="123.0" x2="62.0" y2="123.0" stroke-width="1"/><line x1="15.0" y1="123.0" x2="12.0" y2="177.0" stroke-width="1.6"/><line x1="32.0" y1="123.0" x2="32.0" y2="183.0" stroke-width="2.4"/><line x1="18.0" y1="183.0" x2="62.0" y2="183.0" stroke-width="1"/><line x1="18.0" y1="183.0" x2="18.0" y2="237.0" stroke-width="1.6"/><line x1="32.0" y1="183.0" x2="32.0" y2="243.0" stroke-width="3.4"/><line x1="15.0" y1="243.0" x2="62.0" y2="243.0" stroke-width="1"/><line x1="15.0" y1="243.0" x2="12.0" y2="297.0" stroke-width="1.6"/><line x1="32.0" y1="243.0" x2="32.0" y2="303.0" stroke-width="2.4"/><line x1="18.0" y1="303.0" x2="62.0" y2="303.0" stroke-width="1"/><line x1="18.0" y1="303.0" x2="18.0" y2="357.0" stroke-width="1.6"/><line x1="32.0" y1="303.0" x2="32.0" y2="363.0" stroke-width="3.4"/><line x1="15.0" y1="363.0" x2="62.0" y2="363.0" stroke-width="1"/><line x1="15.0" y1="363.0" x2="13.0" y2="384.0" stroke-width="1.6"/><line x1="32.0" y1="363.0" x2="32.0" y2="384.0" stroke-width="2.4"/></g><g fill="#020f26" stroke="#e32a40" stroke-width="1.9"><circle cx="12.0" cy="30.0" r="3.4"/><circle cx="21.0" cy="30.0" r="3.4"/><circle cx="22.5" cy="30.0" r="3.4"/><circle cx="26.0" cy="30.0" r="3.4"/><circle cx="29.5" cy="30.0" r="3.4"/><circle cx="31.0" cy="30.0" r="3.4"/><circle cx="36.0" cy="30.0" r="3.4"/><circle cx="43.5" cy="30.0" r="3.4"/><circle cx="45.5" cy="30.0" r="3.4"/><circle cx="51.0" cy="30.0" r="3.4"/><circle cx="62.0" cy="30.0" r="3.4"/><circle cx="18.0" cy="63.0" r="3.4"/><circle cx="31.0" cy="63.0" r="3.4"/><circle cx="33.0" cy="63.0" r="3.4"/><circle cx="62.0" cy="63.0" r="3.4"/><circle cx="12.0" cy="117.0" r="3.4"/><circle cx="18.0" cy="117.0" r="3.4"/><circle cx="31.0" cy="117.0" r="3.4"/><circle cx="33.0" cy="117.0" r="3.4"/><circle cx="15.0" cy="123.0" r="3.4"/><circle cx="31.0" cy="123.0" r="3.4"/><circle cx="62.0" cy="123.0" r="3.4"/><circle cx="12.0" cy="177.0" r="3.4"/><circle cx="31.0" cy="177.0" r="3.4"/><circle cx="18.0" cy="183.0" r="3.4"/><circle cx="31.0" cy="183.0" r="3.4"/><circle cx="33.0" cy="183.0" r="3.4"/><circle cx="62.0" cy="183.0" r="3.4"/><circle cx="12.0" cy="237.0" r="3.4"/><circle cx="18.0" cy="237.0" r="3.4"/><circle cx="31.0" cy="237.0" r="3.4"/><circle cx="33.0" cy="237.0" r="3.4"/><circle cx="15.0" cy="243.0" r="3.4"/><circle cx="31.0" cy="243.0" r="3.4"/><circle cx="62.0" cy="243.0" r="3.4"/><circle cx="12.0" cy="297.0" r="3.4"/><circle cx="31.0" cy="297.0" r="3.4"/><circle cx="18.0" cy="303.0" r="3.4"/><circle cx="31.0" cy="303.0" r="3.4"/><circle cx="33.0" cy="303.0" r="3.4"/><circle cx="62.0" cy="303.0" r="3.4"/><circle cx="12.0" cy="357.0" r="3.4"/><circle cx="18.0" cy="357.0" r="3.4"/><circle cx="31.0" cy="357.0" r="3.4"/><circle cx="33.0" cy="357.0" r="3.4"/><circle cx="15.0" cy="363.0" r="3.4"/><circle cx="31.0" cy="363.0" r="3.4"/><circle cx="62.0" cy="363.0" r="3.4"/></g></svg>
<svg class="a" style="left:0;top:0" width="500" height="310"><path d="M461.5 267.8 Q463.4 264.6 465.4 267.8 L465.4 275 Q467 273 469 275 Q471 273.3 473 275.5 Q475.2 274.2 477.2 276.8 L477.2 288 Q476.5 296.2 468.5 296.2 Q464 296.2 460.5 292 L454.3 284.8 Q453.6 281.2 457 282 L461.8 286 Z" fill="#fff" stroke="#020f26" stroke-width="1.2"/><path d="M465.3 276 V280.5 M469.2 276 V280.5 M473 276.5 V280.5" stroke="#8a8f99" stroke-width="0.8"/></svg>
</body></html>
